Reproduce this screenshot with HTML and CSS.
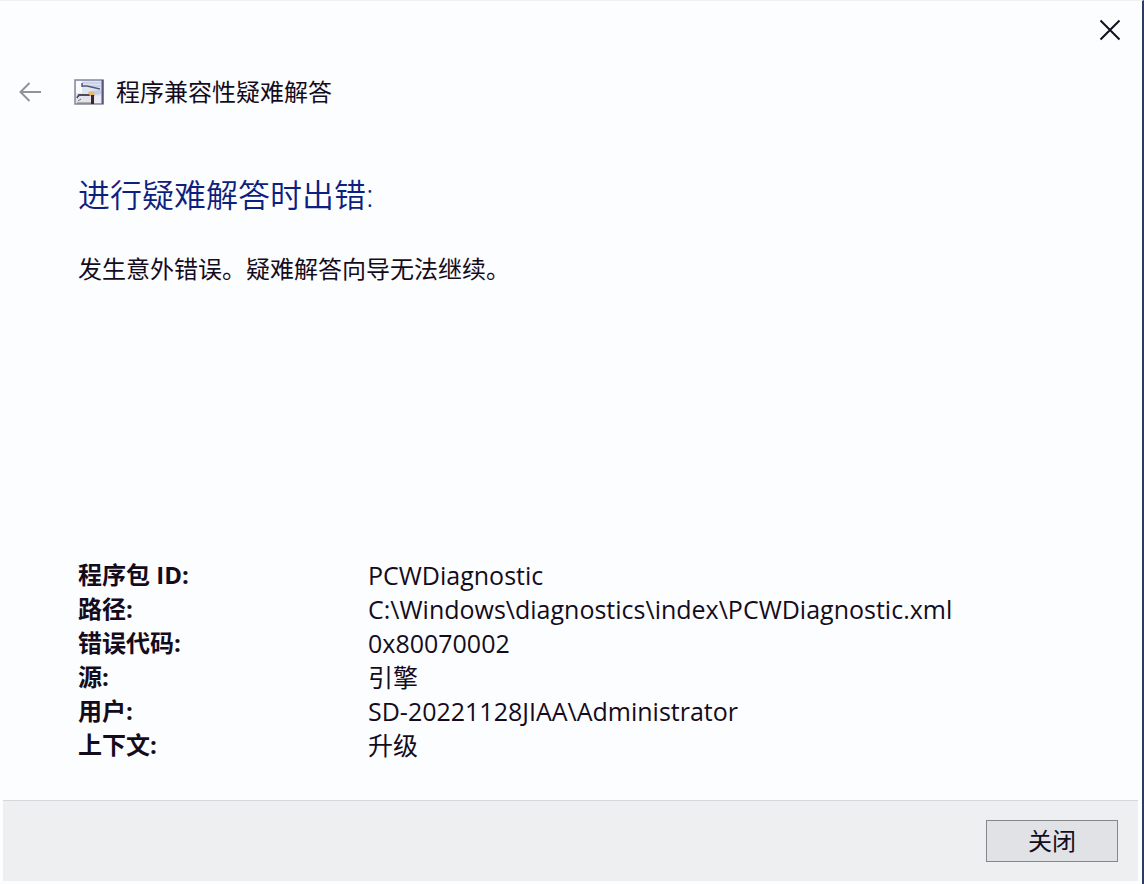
FILE: index.html
```html
<!DOCTYPE html>
<html lang="zh-CN">
<head>
  <meta charset="UTF-8">
  <title>程序兼容性疑难解答</title>
  <link rel="stylesheet" href="styles.css">
</head>
<body>
  <div class="window">
    <!-- Title bar -->
    <div class="titlebar">
      <button class="icon-btn" type="button" aria-label="关闭窗口">
        <svg width="22" height="22" viewBox="0 0 22 22" fill="none" stroke="#101020" stroke-width="2">
          <path d="M1.5 1.5l19 19M20.5 1.5l-19 19"/>
        </svg>
      </button>
    </div>

    <!-- Wizard header -->
    <header class="header">
      <button class="icon-btn" type="button" aria-label="后退">
        <svg width="24" height="22" viewBox="0 0 24 22" fill="none" stroke="#929298" stroke-width="2">
          <path d="M22 11H1.5M10.500 2L1.500 11l9 9"/>
        </svg>
      </button>
      <svg class="app-icon" width="30" height="26" viewBox="0 0 30 26">
        <rect x="1" y="1" width="28" height="24" fill="#dfe4f2" stroke="#85859a" stroke-width="1.5"/>
        <path d="M2 2h6v12H2z" fill="#fafaff"/>
        <path d="M8 4h19M14 7h13" stroke="#c3cdea" stroke-width="1.5"/>
        <path d="M15 12l12-1v4l-7 1z" fill="#c3cdea"/>
        <path d="M8 4v4M8 7l5 0 13 3" fill="none" stroke="#555a78" stroke-width="1.5"/>
        <path d="M3 19l2-3h13" fill="none" stroke="#504a58" stroke-width="2"/>
        <path d="M14 13h6l1 4h-5z" fill="#e8b968"/>
        <path d="M4 18h13v6H4z" fill="#e6e3e8"/>
        <path d="M17 16h3v9h-3z" fill="#3a2430"/>
        <path d="M21 17h7v7h-7z" fill="#eceaf4"/>
        <path d="M4 22l3-2M3 24h14" stroke="#777" stroke-width="1"/>
        <path d="M28.500 1v24" stroke="#58547c" stroke-width="2"/>
      </svg>
      <span class="app-name">程序兼容性疑难解答</span>
    </header>

    <main class="content">
      <h1>进行疑难解答时出错:</h1>
      <p>发生意外错误。疑难解答向导无法继续。</p>

      <dl class="details">
        <dt>程序包 ID:</dt>
        <dd>PCWDiagnostic</dd>
        <dt>路径:</dt>
        <dd>C:\Windows\diagnostics\index\PCWDiagnostic.xml</dd>
        <dt>错误代码:</dt>
        <dd>0x80070002</dd>
        <dt>源:</dt>
        <dd>引擎</dd>
        <dt>用户:</dt>
        <dd>SD-20221128JIAA\Administrator</dd>
        <dt>上下文:</dt>
        <dd>升级</dd>
      </dl>
    </main>

    <footer class="footer">
      <button class="close-btn" type="button">关闭</button>
    </footer>
  </div>
</body>
</html>
```
FILE: styles.css
```css
* {
  box-sizing: border-box;
}

body {
  margin: 0;
  background: #fcfdff;
  color: #140c1c;
  font-family: "Open Sans", "Noto Sans CJK SC", sans-serif;
  font-size: 24px;
  line-height: 34px;
}

button {
  font: inherit;
  color: inherit;
}

.window {
  display: flex;
  flex-direction: column;
  min-height: 100vh;
  padding: 0 4px 3px 3px;
  border-top: 1px solid #eef0f2;
  border-right: 2px solid #2c3c66;
}

.titlebar {
  display: flex;
  justify-content: flex-end;
  padding: 18px 17px 0 0;
}

.icon-btn {
  display: flex;
  padding: 0;
  border: none;
  background: none;
}

.header {
  display: flex;
  align-items: center;
  padding: 34px 16px 0;
}

.app-icon {
  margin: 0 12px 0 31px;
}

.content {
  display: flex;
  flex: 1;
  flex-direction: column;
  padding: 62px 75px 38px;
}

h1 {
  margin: 0;
  color: #0c2080;
  font-size: 32px;
  font-weight: 350;
  line-height: 48px;
}

p {
  margin: 33px 0;
}

.details {
  display: grid;
  grid-template-columns: 290px 1fr;
  margin: auto 0 0;
}

dt {
  font-weight: bold;
}

dd {
  margin: 0;
  font-size: 25px;
}

.footer {
  display: flex;
  justify-content: flex-end;
  padding: 19px 20px;
  border-top: 1px solid #d5d8da;
  background: #eeeff1;
}

.close-btn {
  width: 132px;
  height: 42px;
  padding: 0;
  border: 1px solid #85878b;
  background: #e1e2e5;
}
```
